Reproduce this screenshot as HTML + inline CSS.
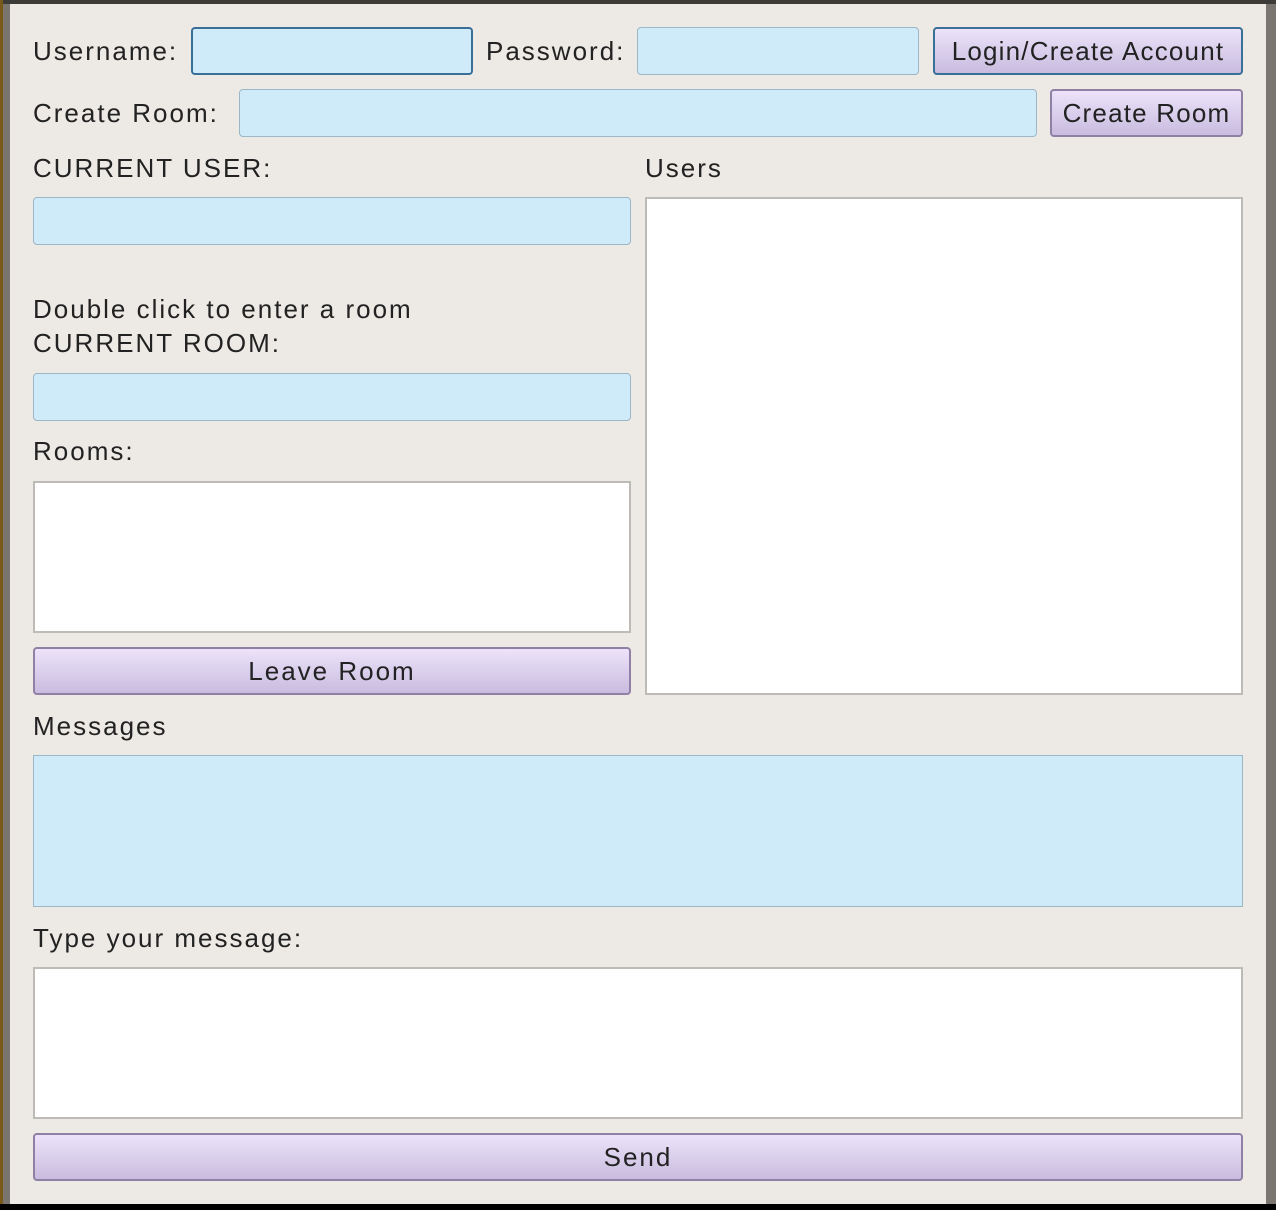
<!DOCTYPE html>
<html><head><meta charset="utf-8"><style>
html,body{margin:0;padding:0;}
body{width:1276px;height:1210px;position:relative;overflow:hidden;background:#edeae5;font-family:"Liberation Sans",sans-serif;font-size:26px;color:#222;}
.a{position:absolute;box-sizing:border-box;}
.l{position:absolute;white-space:nowrap;line-height:30px;letter-spacing:2px;}
.in{background:#cfeaf8;border:1px solid #9ab8c8;border-radius:4px;}
.foc{border:2px solid #3a6f98;}
.w{background:#fff;border:2px solid #bdbbb6;}
.b{background:linear-gradient(#ece3fa,#c9bcdf);border:2px solid #8f81a5;border-radius:4px;text-align:center;line-height:44px;letter-spacing:2px;color:#222;white-space:nowrap;}
.bb{border-color:#3a6f98;}
</style></head><body>
<div class="a" style="left:0;top:0;width:1276px;height:4px;background:#3c3b37"></div>
<div class="a" style="left:0;top:0;width:3px;height:1210px;background:#7a5a1a"></div>
<div class="a" style="left:3px;top:4px;width:7px;height:1206px;background:#7a756e"></div>
<div class="a" style="left:1266px;top:4px;width:10px;height:1206px;background:#7a756e"></div>
<div class="a" style="left:0;top:1204px;width:1276px;height:6px;background:#000"></div>

<div class="l" style="left:33px;top:36px">Username:</div>
<div class="a in foc" style="left:191px;top:27px;width:282px;height:48px"></div>
<div class="l" style="left:486px;top:36px">Password:</div>
<div class="a in" style="left:637px;top:27px;width:282px;height:48px"></div>
<div class="a b bb" style="left:933px;top:27px;width:310px;height:48px;letter-spacing:1.2px">Login/Create Account</div>

<div class="l" style="left:33px;top:98px">Create Room:</div>
<div class="a in" style="left:239px;top:89px;width:798px;height:48px"></div>
<div class="a b" style="left:1050px;top:89px;width:193px;height:48px;letter-spacing:1.2px">Create Room</div>

<div class="l" style="left:33px;top:153px">CURRENT USER:</div>
<div class="a in" style="left:33px;top:197px;width:598px;height:48px"></div>
<div class="l" style="left:645px;top:153px">Users</div>
<div class="a w" style="left:645px;top:197px;width:598px;height:498px"></div>

<div class="l" style="left:33px;top:294px">Double click to enter a room</div>
<div class="l" style="left:33px;top:328px">CURRENT ROOM:</div>
<div class="a in" style="left:33px;top:373px;width:598px;height:48px"></div>
<div class="l" style="left:33px;top:436px">Rooms:</div>
<div class="a w" style="left:33px;top:481px;width:598px;height:152px"></div>
<div class="a b" style="left:33px;top:647px;width:598px;height:48px">Leave Room</div>

<div class="l" style="left:33px;top:711px">Messages</div>
<div class="a in" style="left:33px;top:755px;width:1210px;height:152px;border-radius:0"></div>
<div class="l" style="left:33px;top:923px">Type your message:</div>
<div class="a w" style="left:33px;top:967px;width:1210px;height:152px"></div>
<div class="a b" style="left:33px;top:1133px;width:1210px;height:48px">Send</div>
</body></html>
